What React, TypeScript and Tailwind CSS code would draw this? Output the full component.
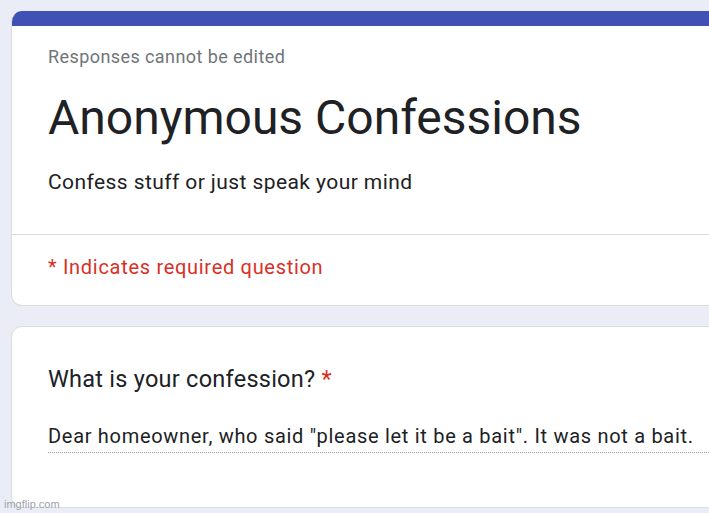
import React from 'react'

function HeaderCard() {
  return (
    <div className="overflow-hidden rounded-[11px] border border-t-0 border-[#dadce0] bg-white">
      <div className="h-[15px] bg-[#3f51b5]" />
      <div className="px-[36px] pt-[19px] pb-[38px]">
        <p className="text-[18px] leading-[24px] tracking-[0.42px] text-[#70757a]">Responses cannot be edited</p>
        <h1 className="mt-[21px] text-[48px] leading-[56px] text-[#202124]">Anonymous Confessions</h1>
        <p className="mt-[22px] text-[21px] leading-[28px] tracking-[0.42px] text-[#202124]">Confess stuff or just speak your mind</p>
      </div>
      <div className="border-t border-[#dadce0] px-[36px] pt-[18px] pb-[24px]">
        <p className="text-[20px] leading-[28px] tracking-[0.7px] text-[#d93025]">* Indicates required question</p>
      </div>
    </div>
  )
}

function QuestionCard() {
  return (
    <div className="rounded-[11px] border border-[#dadce0] bg-white pl-[36px] pt-[36px] pb-[54px]">
      <p className="text-[23.5px] leading-[32px] tracking-[0.25px] text-[#202124]">
        What is your confession? <span className="text-[#d93025]">*</span>
      </p>
      <div className="mt-[28px] border-b border-dotted border-[#9aa0a6] pb-[3px]">
        <p className="whitespace-nowrap text-[20px] leading-[26px] tracking-[0.7px] text-[#202124]">
          Dear homeowner, who said "please let it be a bait". It was not a bait.
        </p>
      </div>
    </div>
  )
}

export default function App() {
  return (
    <div className="relative h-[513px] w-[709px] overflow-hidden bg-[#eaedf6] font-['Roboto',sans-serif]">
      <div className="flex w-[760px] flex-col gap-[20px] pl-[11px] pt-[11px]">
        <HeaderCard />
        <QuestionCard />
      </div>
      <span className="absolute bottom-[1px] left-[4px] font-['Liberation_Sans',sans-serif] text-[11px] text-[#a0a4aa]">imgflip.com</span>
    </div>
  )
}
